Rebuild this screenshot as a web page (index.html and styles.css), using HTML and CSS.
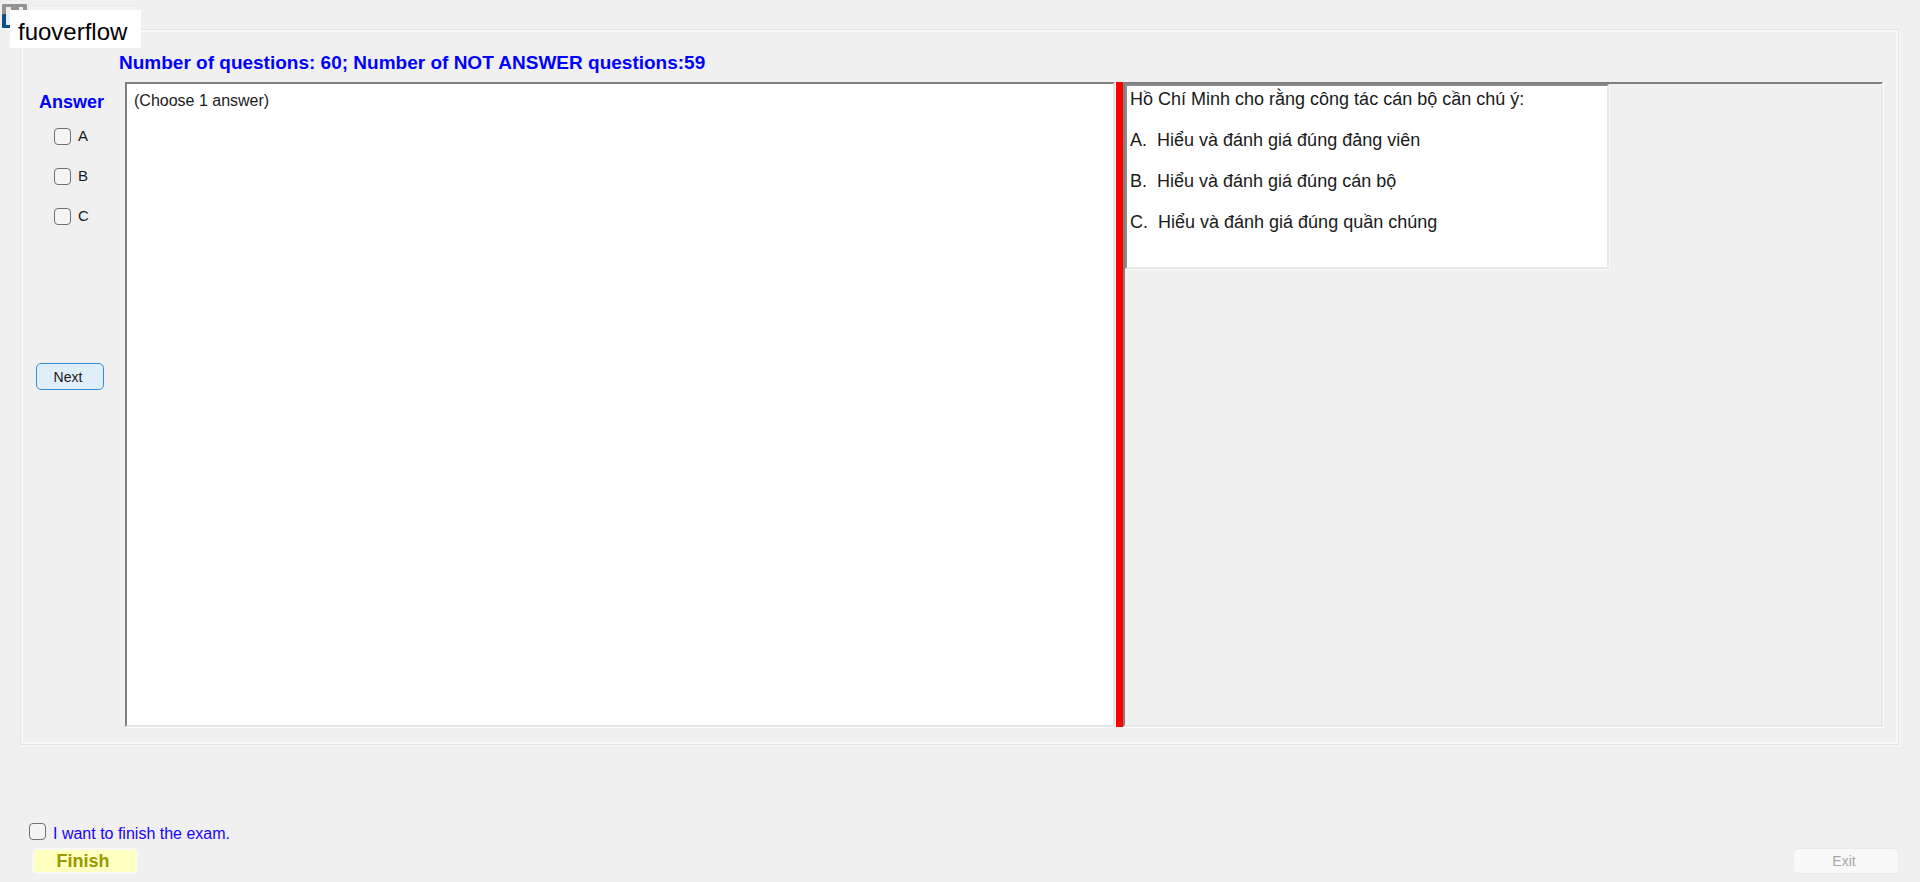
FILE: index.html
```html
<!DOCTYPE html>
<html lang="vi">
<head>
<meta charset="utf-8">
<title>Exam</title>
<link rel="stylesheet" href="styles.css">
</head>
<body>
<div class="tab-edge"></div>
<svg class="logo" viewBox="0 0 26 25" aria-hidden="true">
  <rect width="25" height="10" rx="1" fill="#929292"/>
  <path d="M4 3h5v7H4zM17 3h4v7h-4z" fill="#ededed"/>
  <rect y="10" width="12" height="14" rx="1" fill="#0d4f80"/>
  <path d="M4 10h8v11H4z" fill="#e6eef3"/>
</svg>
<div class="brand">fuoverflow</div>
<main class="group">
  <h1 class="status">Number of questions: 60; Number of NOT ANSWER questions:59</h1>
  <div class="work">
    <form class="answers">
      <h2 class="answers-title">Answer</h2>
      <label class="choice"><input class="tick" type="checkbox">A</label>
      <label class="choice"><input class="tick" type="checkbox">B</label>
      <label class="choice"><input class="tick" type="checkbox">C</label>
      <button class="next" type="button">Next</button>
    </form>
    <section class="sheet">(Choose 1 answer)</section>
    <div class="splitter"></div>
    <section class="viewer">
      <div class="question">
        <p class="line">Hồ Chí Minh cho rằng công tác cán bộ cần chú ý:</p>
        <p class="line">A.&nbsp; Hiểu và đánh giá đúng đảng viên</p>
        <p class="line">B.&nbsp; Hiểu và đánh giá đúng cán bộ</p>
        <p class="line">C.&nbsp; Hiểu và đánh giá đúng quần chúng</p>
      </div>
    </section>
  </div>
</main>
<footer class="footer">
  <label class="confirm"><input class="tick" type="checkbox">I want to finish the exam.</label>
  <div class="actions">
    <button class="finish" type="button">Finish</button>
    <button class="exit" type="button" disabled>Exit</button>
  </div>
</footer>
</body>
</html>
```
FILE: styles.css
```css
* { box-sizing: border-box; }
body {
  margin: 0;
  min-height: 100vh;
  display: flex;
  flex-direction: column;
  padding: 29px 21px 8px 20px;
  background: #f0f0f0;
  color: #1a1a1a;
  font-family: "Liberation Sans", Arial, sans-serif;
  font-size: 16px;
}
.tab-edge {
  position: absolute;
  left: 28px;
  top: 5px;
  width: 108px;
  height: 24px;
  background: #f3f3f3;
  border: 1px solid #e9e9e9;
}
.logo { position: absolute; left: 2px; top: 4px; width: 26px; height: 25px; }
.brand {
  position: absolute;
  left: 10px;
  top: 10px;
  padding: 8px 14px 2px 8px;
  background: #fff;
  color: #000;
  font-size: 24px;
  line-height: 28px;
}
.group {
  flex: 1;
  display: flex;
  flex-direction: column;
  border: 1px solid #e5e5e5;
  box-shadow: inset 0 0 0 2px #f8f8f8, 1px 1px 0 1px #f5f5f5;
  padding: 20px 15px 17px 11px;
}
.status {
  margin: 0 0 6px 87px;
  font-size: 19px;
  line-height: 26px;
  color: #00f;
}
.work { flex: 1; display: flex; }
.answers { width: 93px; display: flex; flex-direction: column; align-items: flex-start; }
.answers-title { margin: 10px 0 14px 7px; font-size: 18px; line-height: 20px; color: #00f; }
.choice {
  display: flex;
  align-items: center;
  gap: 7px;
  height: 20px;
  margin: 0 0 20px 22px;
  font-size: 15px;
  line-height: 20px;
}
.tick {
  appearance: none;
  width: 17px;
  height: 17px;
  margin: 0;
  border: 1px solid #707070;
  border-radius: 4px;
  background: #f4f4f4;
}
.next {
  width: 68px;
  height: 27px;
  margin: 117px 0 0 4px;
  padding: 0 4px 0 0;
  border: 1px solid #2f8fdc;
  border-radius: 5px;
  background: #e0eef9;
  color: #1a1a1a;
  font: 14px "Liberation Sans", sans-serif;
}
.sheet {
  flex: 972 1 0;
  border: 2px solid;
  border-color: #808080 #e6e6e6 #e6e6e6 #808080;
  box-shadow: 1px 1px 0 #fff;
  background: #fff;
  padding: 7px;
  line-height: 20px;
}
.splitter { width: 7px; margin-left: 1px; background: #f00; }
.viewer {
  flex: 756 1 0;
  border: 2px solid;
  border-color: #808080 #e8e8e8 #e8e8e8 #808080;
  box-shadow: 1px 1px 0 #fff;
}
.question {
  width: 64%;
  height: 185px;
  border: 2px solid;
  border-color: #8a8a8a #e8e8e8 #e8e8e8 #8a8a8a;
  box-shadow: 1px 1px 0 #f8f8f8;
  background: #fff;
  padding: 1px 3px;
}
.line { margin: 0 0 17px; font-size: 18px; line-height: 24px; }
.footer { display: flex; flex-direction: column; gap: 3px; padding: 78px 0 0 9px; }
.confirm { display: flex; align-items: flex-start; align-self: flex-start; gap: 7px; color: #1a00ff; line-height: 22px; }
.actions { display: flex; justify-content: space-between; padding-left: 3px; }
.finish, .exit {
  width: 106px;
  height: 26px;
  padding: 0 4px 0 0;
  border: 2px solid #f8f8f8;
  border-radius: 5px;
  font-family: "Liberation Sans", sans-serif;
}
.finish { background: #ffffc0; color: #999900; font-size: 18px; font-weight: bold; }
.exit { background: #f9f9f9; border: 1px solid #ebebeb; color: #a6a6a6; font-size: 14px; }
```
